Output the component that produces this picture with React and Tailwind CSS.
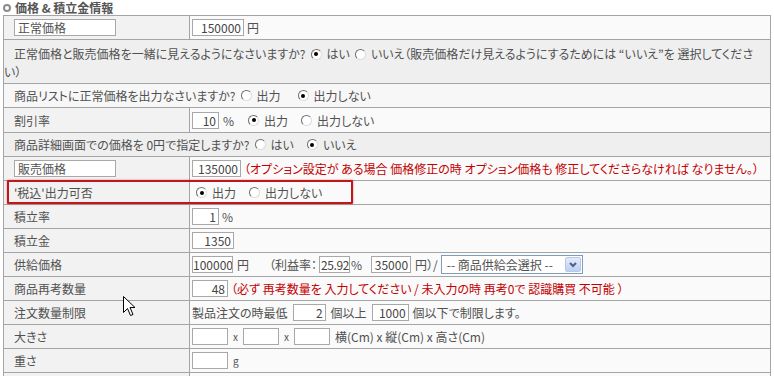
import React from "react";

function Radio({ checked, className = "mx-[5px]" }) {
    return (
        <span className={"inline-flex items-center justify-center w-[11px] h-[11px] rounded-full bg-white border border-t-[#6f6f6f] border-l-[#6f6f6f] border-r-[#dcdcdc] border-b-[#dcdcdc] " + className}>
            {checked && <span className="w-[4px] h-[4px] rounded-full bg-black" />}
        </span>
    );
}

function Box({ className = "", children }) {
    return (
        <span className={"inline-block h-[17px] border border-[#a8a8a8] bg-white text-right pr-[2px] leading-[15px] text-[#444] overflow-hidden " + className}>
            {children}
        </span>
    );
}

function Row({ label, boxed, h = "h-[24px]", children }) {
    return (
        <div className={"flex border-b border-[#a5a5a5] " + h}>
            <div className="w-[186px] shrink-0 border-r border-[#a5a5a5] bg-[#f2f2f2] flex items-center pl-[10px]">
                {boxed ? (
                    <span className="inline-block w-[102px] h-[17px] border border-[#a8a8a8] bg-white pl-[3px] leading-[15px]">{label}</span>
                ) : (
                    label
                )}
            </div>
            <div className="flex-1 bg-[#fafafa] flex items-center pl-[2px] whitespace-nowrap overflow-hidden">
                {children}
            </div>
        </div>
    );
}

function Cursor() {
    return (
        <svg className="absolute left-[123px] top-[296px]" width="13" height="21" viewBox="0 0 13 21">
            <path d="M0.5 0.5 L0.5 16.5 L4.5 12.5 L7.5 19.5 L10 18.5 L7 11.5 L12 11.5 Z" fill="#fff" stroke="#000" strokeWidth="1" />
        </svg>
    );
}

export default function App() {
    return (
        <div className="relative w-[774px] h-[376px] overflow-hidden bg-white text-[12px] text-[#515151] [font-family:'Noto_Sans_CJK_JP','Noto_Sans_CJK_KR',sans-serif] [font-feature-settings:'palt']">
            <div className="h-[15px] flex items-center pl-[3px] font-bold text-[#555] leading-[15px]">
                <span className="inline-block w-[8px] h-[8px] rounded-full border-2 border-[#8c8c8c] bg-white mr-[4px]" />
                価格 &amp; 積立金情報
            </div>

            <div className="ml-[3px] w-[768px] border-l border-r border-t border-[#a5a5a5] leading-[15px]">
                <Row label="正常価格" boxed>
                    <Box className="w-[52px]">150000</Box>
                    <span className="ml-[3px]">円</span>
                </Row>

                <div className="h-[44px] border-b border-[#a5a5a5] bg-[#efefef] pt-[5px] leading-[18px]">
                    <div className="flex items-center whitespace-nowrap overflow-hidden pl-[10px]">
                        正常価格と販売価格を一緒に見えるようになさいますか?
                        <Radio checked />はい<Radio />いいえ（販売価格だけ見えるようにするためには “いいえ”を 選択してくださ
                    </div>
                    <div>い）</div>
                </div>

                <div className="h-[24px] border-b border-[#a5a5a5] bg-[#f7f7f7] flex items-center pl-[10px]">
                    商品リストに正常価格を出力なさいますか?
                    <Radio />出力<span className="w-[12px]" /><Radio checked />出力しない
                </div>

                <Row label="割引率" h="h-[25px]">
                    <Box className="w-[27px]">10</Box>
                    <span className="ml-[4px]">%</span>
                    <Radio checked className="ml-[14px] mr-[5px]" />出力<span className="w-[8px]" /><Radio />出力しない
                </Row>

                <div className="h-[24px] border-b border-[#a5a5a5] bg-[#efefef] flex items-center pl-[10px]">
                    商品詳細画面での価格を 0円で指定しますか?
                    <Radio />はい<span className="w-[8px]" /><Radio checked />いいえ
                </div>

                <Row label="販売価格" boxed>
                    <Box className="w-[49px]">135000</Box>
                    <span className="ml-[3px] text-[#c40000]">（オプション設定が ある場合 価格修正の時 オプション価格も 修正してくださらなければ なりません。）</span>
                </Row>

                <Row label="'税込'出力可否">
                    <Radio checked className="ml-[4px] mr-[5px]" />出力<span className="w-[8px]" /><Radio />出力しない
                </Row>

                <Row label="積立率">
                    <Box className="w-[27px]">1</Box>
                    <span className="ml-[3px]">%</span>
                </Row>

                <Row label="積立金">
                    <Box className="w-[42px]">1350</Box>
                </Row>

                <Row label="供給価格">
                    <Box className="w-[41px]">100000</Box>
                    <span className="ml-[4px]">円</span>
                    <span className="ml-[20px] mr-[2px]">（利益率：</span>
                    <Box className="w-[31px] pl-[1px] pr-0 text-left tracking-[-0.4px]">25.92</Box>
                    <span className="ml-[1px]">%</span>
                    <Box className="w-[40px] ml-[9px]">35000</Box>
                    <span className="ml-[4px]">円）/</span>
                    <span className="ml-[3px] inline-flex items-center h-[19px] w-[142px] border border-[#7f9db9] bg-white pl-[5px] justify-between pr-[1px]">
                        <span>-- 商品供給会選択 --</span>
                        <span className="w-[16px] h-[15px] rounded-[2px] border border-[#b6c8e9] bg-gradient-to-b from-[#e2ebfb] to-[#bcd0f1] flex items-center justify-center">
                            <svg width="8" height="6" viewBox="0 0 8 6">
                                <path d="M1 1 L4 4 L7 1" fill="none" stroke="#4d6185" strokeWidth="2" />
                            </svg>
                        </span>
                    </span>
                </Row>

                <Row label="商品再考数量">
                    <Box className="w-[36px]">48</Box>
                    <span className="ml-[3px] text-[#c40000]">（必ず 再考数量を 入力してください / 未入力の時 再考0で 認識購買 不可能 ）</span>
                </Row>

                <Row label="注文数量制限">
                    製品注文の時最低
                    <Box className="w-[33px] ml-[5px]">2</Box>
                    <span className="ml-[5px]">個以上</span>
                    <Box className="w-[37px] ml-[5px]">1000</Box>
                    <span className="ml-[4px]">個以下で制限します。</span>
                </Row>

                <Row label="大きさ">
                    <Box className="w-[36px]" />
                    <span className="mx-[5px] text-[10px]">x</span>
                    <Box className="w-[36px]" />
                    <span className="mx-[5px] text-[10px]">x</span>
                    <Box className="w-[36px]" />
                    <span className="ml-[5px]">横(Cm) x 縦(Cm) x 高さ(Cm)</span>
                </Row>

                <Row label="重さ">
                    <Box className="w-[36px]" />
                    <span className="ml-[5px] text-[10px]">g</span>
                </Row>

                <Row label="">
                    <span />
                </Row>
            </div>

            <div className="absolute left-[7px] top-[180px] w-[346px] h-[24px] border-2 border-[#c1161c] rounded-[1px] shadow-[0_0_2px_rgba(193,22,28,0.6)]" />

            <Cursor />
        </div>
    );
}
